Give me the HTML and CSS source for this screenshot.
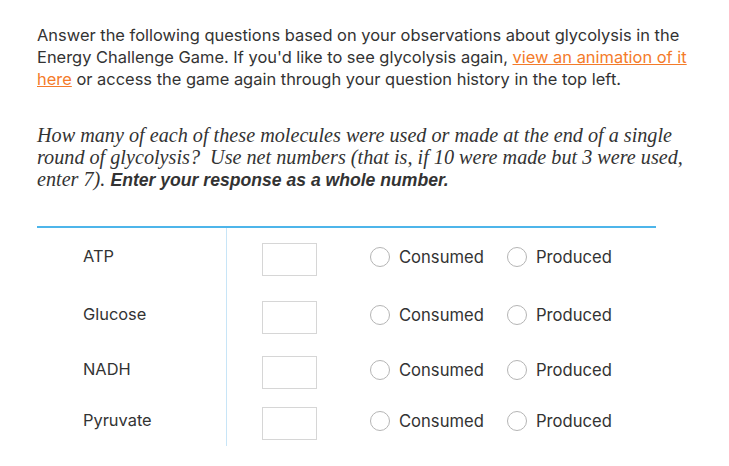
FILE: index.html
```html
<!DOCTYPE html>
<html>
<head>
<meta charset="utf-8">
<link rel="stylesheet" href="styles.css">
</head>
<body>
<div class="page">
  <p class="intro">Answer the following questions based on your observations about glycolysis in the Energy Challenge Game. If you'd like to see glycolysis again, <a href="#">view an animation of it here</a> or access the game again through your question history in the top left.</p>
  <p class="question">How many of each of these molecules were used or made at the end of a single round of glycolysis?&nbsp; Use net numbers (that is, if 10 were made but 3 were used, enter 7). <b>Enter your response as a whole number.</b></p>
  <div class="table">
    <div class="row r1">
      <div class="name">ATP</div>
      <div class="cell">
        <span class="box"></span>
        <span class="opt first"><span class="radio"></span>Consumed</span>
        <span class="opt"><span class="radio"></span>Produced</span>
      </div>
    </div>
    <div class="row r2">
      <div class="name">Glucose</div>
      <div class="cell">
        <span class="box"></span>
        <span class="opt first"><span class="radio"></span>Consumed</span>
        <span class="opt"><span class="radio"></span>Produced</span>
      </div>
    </div>
    <div class="row r3">
      <div class="name">NADH</div>
      <div class="cell">
        <span class="box"></span>
        <span class="opt first"><span class="radio"></span>Consumed</span>
        <span class="opt"><span class="radio"></span>Produced</span>
      </div>
    </div>
    <div class="row r4">
      <div class="name">Pyruvate</div>
      <div class="cell">
        <span class="box"></span>
        <span class="opt first"><span class="radio"></span>Consumed</span>
        <span class="opt"><span class="radio"></span>Produced</span>
      </div>
    </div>
  </div>
</div>
</body>
</html>
```
FILE: styles.css
```css
html, body {
  margin: 0;
  padding: 0;
  background: #fff;
}
.page {
  padding: 24px 0 0 37px;
  color: #333;
  font-family: Inter, Roboto, "Liberation Sans", sans-serif;
}
.intro {
  margin: 0;
  width: 660px;
  font-size: 16.45px;
  line-height: 22px;
}
.intro a {
  color: #f47b2a;
  text-decoration: underline;
}
.question {
  margin: 34px 0 0 0;
  width: 650px;
  font-family: "Liberation Serif", serif;
  font-style: italic;
  font-size: 20.2px;
  line-height: 22px;
}
.question b {
  font-family: "Liberation Sans", Arial, sans-serif;
  font-style: italic;
  font-weight: bold;
  font-size: 17.6px;
}
.table {
  margin-top: 35px;
  width: 619px;
  border-top: 2px solid #4db5ea;
}
.row {
  display: flex;
  align-items: stretch;
}
.r1 { height: 58px; }
.r2 { height: 55px; }
.r3 { height: 51px; }
.r4 { height: 54px; }
.name {
  width: 190px;
  box-sizing: border-box;
  padding: 17px 0 0 46px;
  border-right: 1px solid #c8e5f7;
  font-size: 16.4px;
  line-height: 22px;
}
.cell {
  display: flex;
  align-items: flex-start;
  padding: 15px 0 0 35px;
}
.box {
  width: 55px;
  height: 33px;
  box-sizing: border-box;
  border: 1px solid #d6d6d6;
  margin-right: 53px;
}
.opt {
  display: flex;
  align-items: center;
  margin-top: 3px;
  height: 22px;
  font-size: 16.6px;
  line-height: 22px;
}
.opt.first {
  width: 137px;
}
.radio {
  width: 20px;
  height: 20px;
  box-sizing: border-box;
  border: 1px solid #b5b5b5;
  border-radius: 50%;
  margin-right: 9px;
}
```
